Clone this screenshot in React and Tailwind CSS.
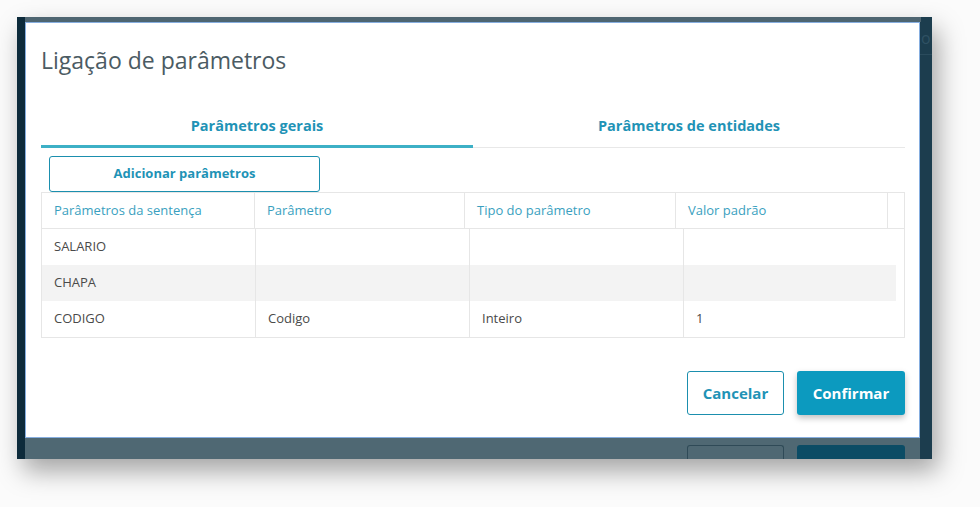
import React from 'react';

const headers = [
  { label: 'Parâmetros da sentença', w: 'w-[213px]' },
  { label: 'Parâmetro', w: 'w-[210px]' },
  { label: 'Tipo do parâmetro', w: 'w-[211px]' },
  { label: 'Valor padrão', w: 'w-[212px]' },
];

const rows = [
  ['SALARIO', '', '', ''],
  ['CHAPA', '', '', ''],
  ['CODIGO', 'Codigo', 'Inteiro', '1'],
];

const ParamTable = () => (
  <div className="border border-[#e6e6e6] text-[13px]">
    <div className="flex h-[36px] border-b border-[#e6e6e6]">
      {headers.map((h) => (
        <div
          key={h.label}
          className={`${h.w} flex items-center border-r border-[#e6e6e6] pl-[12px] text-[#3a9fc0]`}
        >
          {h.label}
        </div>
      ))}
      <div className="flex-1" />
    </div>
    {rows.map((row, i) => (
      <div key={row[0]} className="flex h-[36px]">
        {row.map((cell, j) => (
          <div
            key={j}
            className={`flex items-center pl-[12px] text-[#4a4a4a] ${
              j < 3 ? 'w-[214px] border-r border-[#e6e6e6]' : 'flex-1'
            } ${i === 1 ? (j < 3 ? 'bg-[#f3f3f3]' : 'mr-[8px] bg-[#f3f3f3]') : ''}`}
          >
            {cell}
          </div>
        ))}
      </div>
    ))}
  </div>
);

const Modal = () => (
  <div className="flex h-[416px] w-[895px] flex-col border border-[#86aee0] bg-white pl-[15px] pr-[14px] pt-[22px]">
    <h1 className="h-[30px] text-[23px] leading-[30px] text-[#4b5b63]">Ligação de parâmetros</h1>

    <div className="mt-[25px] flex">
      <div className="flex h-[48px] w-[432px] items-center justify-center border-b-[3px] border-[#3db0c6] pt-[6px] text-[14.5px] font-bold text-[#1f93b6]">
        Parâmetros gerais
      </div>
      <div className="flex h-[48px] flex-1 items-center justify-center border-b border-[#e8e8e8] pb-[2px] pt-[6px] text-[14.5px] font-bold text-[#1f93b6]">
        Parâmetros de entidades
      </div>
    </div>

    <button className="ml-[8px] mt-[8px] h-[36px] w-[271px] rounded-[3px] border border-[#1b8fae] text-[13px] font-bold text-[#1f93b6]">
      Adicionar parâmetros
    </button>

    <ParamTable />

    <div className="mt-[33px] flex justify-end gap-[13px]">
      <button className="h-[44px] w-[97px] rounded-[3px] border border-[#1b8fae] text-[15px] font-bold text-[#1f93b6]">
        Cancelar
      </button>
      <button className="h-[44px] w-[108px] rounded-[3px] bg-[#0c9abf] text-[15px] font-bold text-white shadow-[0_3px_6px_rgba(0,0,0,0.25)]">
        Confirmar
      </button>
    </div>
  </div>
);

const App = () => (
  <div
    className="h-[507px] w-[980px] overflow-hidden bg-[#fbfbfb] pl-[17px] pt-[17px]"
    style={{ fontFamily: '"Open Sans", Lato, sans-serif' }}
  >
    <div className="flex h-[442px] w-[915px] shadow-[6px_12px_24px_rgba(0,0,0,0.35)]">
      <div className="w-[8px] bg-[#0d2b3b]" />
      <div className="flex w-[895px] flex-col">
        <div className="h-[5px] bg-[#4e6571]" />
        <Modal />
        <div className="flex flex-1 justify-end gap-[13px] bg-[#4f6873] pr-[15px] pt-[7px]">
          <div className="w-[97px] rounded-t-[3px] border border-b-0 border-[#2f4a57]" />
          <div className="w-[108px] rounded-t-[3px] bg-[#0b4c65]" />
        </div>
      </div>
      <div className="flex w-[12px] flex-col overflow-hidden bg-[#1c3d4e]">
        <div className="h-[5px] w-[1px] bg-[#4e6571]" />
        <div className="mt-[6px] pl-[1px] text-[16px] leading-[20px] text-[#2f5163]">o</div>
        <div className="mt-[6px] h-[1px] bg-[#2a4b5c]" />
      </div>
    </div>
  </div>
);

export default App;
